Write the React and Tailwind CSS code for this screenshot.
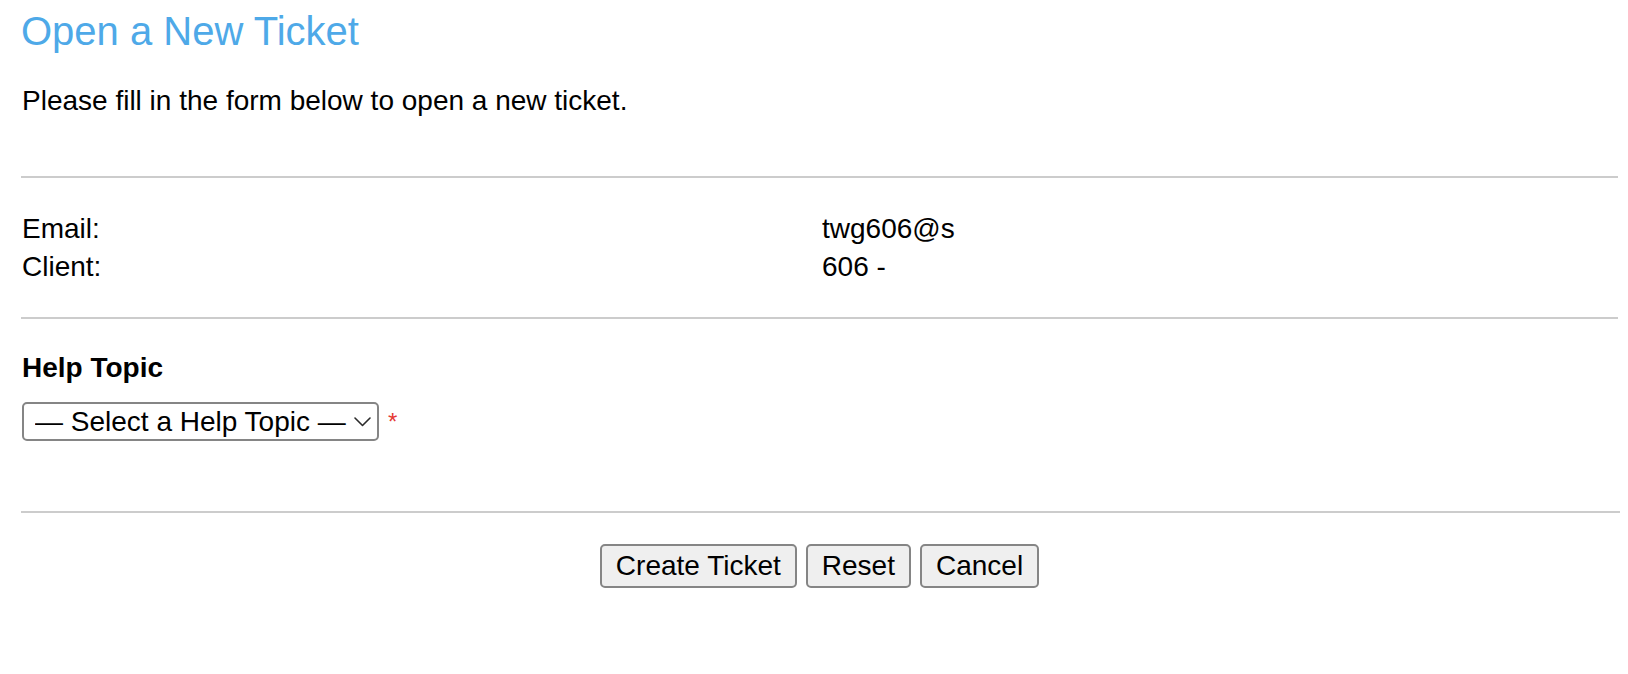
import React from "react";

export default function App() {
  return (
    <div className="min-h-[674px] bg-white pl-[21px] pr-[10px] font-['Liberation_Sans',Arial,Helvetica,sans-serif] text-[28px] text-black">
      <h1 className="pt-[8px] text-[40px] leading-[46px] font-normal text-[#4ea9e8]">
        Open a New Ticket
      </h1>
      <p className="mt-[31px] pl-[1px] leading-[32px]">
        Please fill in the form below to open a new ticket.
      </p>

      <div className="mt-[59px] h-[2px] bg-[#cccccc]" />

      <div className="mt-[32px] grid grid-cols-[800px_1fr] pl-[1px] leading-[38px]">
        <div>Email:</div>
        <div>
          <span className="inline-block w-[133px] overflow-hidden whitespace-nowrap align-top">
            twg606@s
          </span>
        </div>
        <div>Client:</div>
        <div>606 -</div>
      </div>

      <div className="mt-[31px] h-[2px] bg-[#cccccc]" />

      <div className="mt-[33px] pl-[1px] font-bold leading-[32px]">Help Topic</div>

      <div className="mt-[18px] flex items-start pl-[1px]">
        <div className="relative">
          <select
            defaultValue=""
            className="block h-[39px] w-[357px] appearance-none rounded-[5px] border-2 border-[#858585] bg-white pl-[11px] pr-[30px] text-[28px] leading-[32px] text-black outline-none"
          >
            <option value="">— Select a Help Topic —</option>
          </select>
          <svg
            className="pointer-events-none absolute right-[8px] top-[15px]"
            width="17"
            height="10"
            viewBox="0 0 17 10"
            fill="none"
          >
            <polyline
              points="1,1 8.5,8.5 16,1"
              stroke="#2b2b2b"
              strokeWidth="1.6"
              strokeLinecap="round"
              strokeLinejoin="round"
            />
          </svg>
        </div>
        <span className="ml-[9px] mt-[8px] text-[24px] leading-[24px] text-[#e53935]">*</span>
      </div>

      <div className="mt-[70px] h-[2px] w-[1599px] bg-[#cccccc]" />

      <div className="mt-[31px] flex justify-center gap-[9px]">
        <button className="rounded-[5px] border-2 border-[#858585] bg-[#efefef] px-[14px] py-[4px] text-[28px] leading-[32px] text-black">
          Create Ticket
        </button>
        <button className="rounded-[5px] border-2 border-[#858585] bg-[#efefef] px-[14px] py-[4px] text-[28px] leading-[32px] text-black">
          Reset
        </button>
        <button className="rounded-[5px] border-2 border-[#858585] bg-[#efefef] px-[14px] py-[4px] text-[28px] leading-[32px] text-black">
          Cancel
        </button>
      </div>
    </div>
  );
}
